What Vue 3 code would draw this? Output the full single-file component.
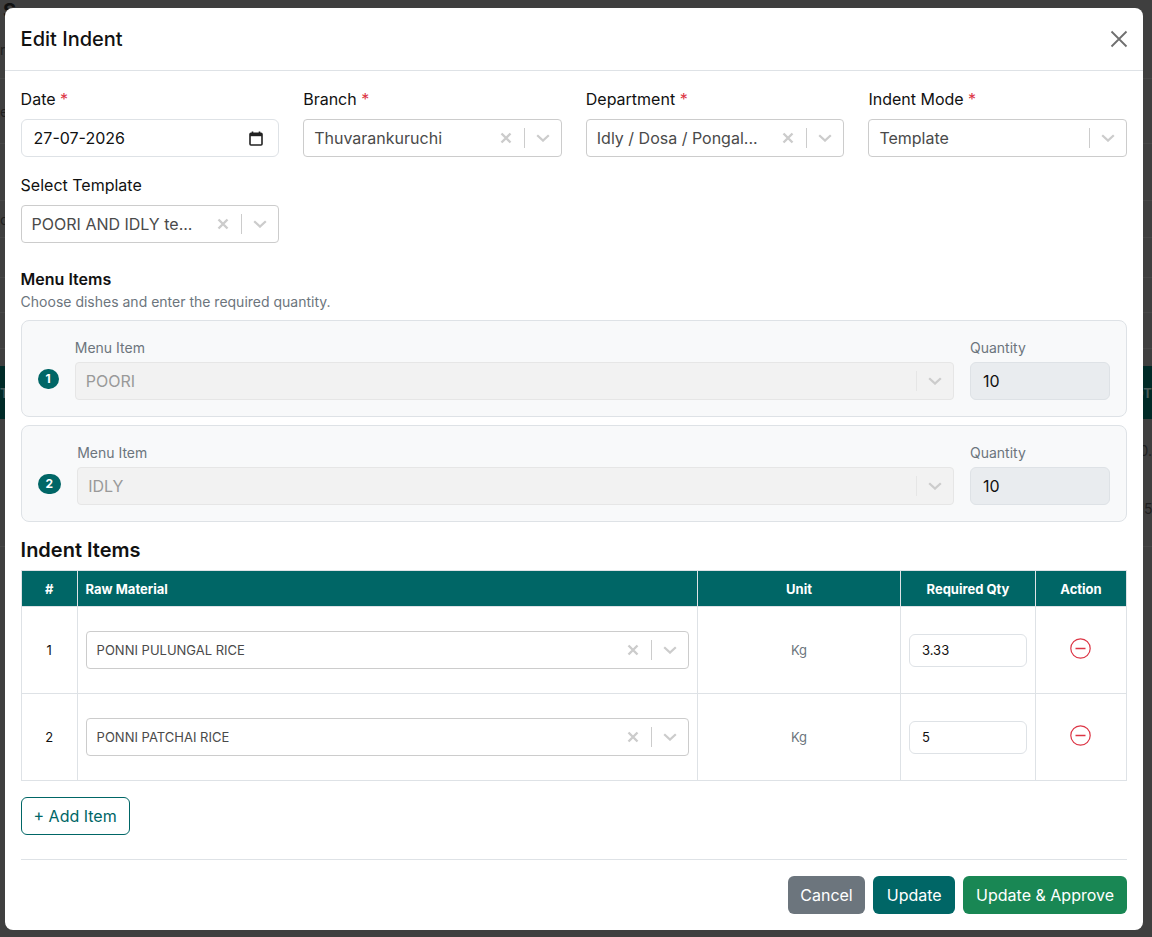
<template>
  <div class="page">
    <div class="behind">
      <span class="ghost g-title">S</span>
      <span class="ghost g-r">r</span>
      <span class="ghost g-e">e</span>
      <span class="ghost g-o">o</span>
      <div v-for="y in ghostLines" :key="y" class="ghost-line" :style="{ top: y + 'px' }"></div>
      <div class="ghost-bar">
        <span>T</span>
        <span>OT</span>
      </div>
      <span class="ghost g-d">0.</span>
      <span class="ghost g-5">5</span>
    </div>

    <div class="modal">
      <header class="modal-head">
        <h5>Edit Indent</h5>
        <svg class="close" width="18" height="18" viewBox="0 0 18 18">
          <path d="M1.5 1.5 16.5 16.5M16.5 1.5 1.5 16.5" stroke="#6f6f6f" stroke-width="1.8" fill="none" />
        </svg>
      </header>

      <div class="modal-body">
        <div class="form-grid">
          <div class="field">
            <label>Date <i>*</i></label>
            <div class="date-input">
              <span>27-07-2026</span>
              <svg width="14" height="15" viewBox="0 0 14 15">
                <path d="M3.5 0.5v2M10.5 0.5v2" stroke="#222" stroke-width="1.6" />
                <rect x="1" y="2.2" width="12" height="11.8" rx="1" fill="none" stroke="#222" stroke-width="1.6" />
                <rect x="1" y="2.2" width="12" height="3" fill="#222" />
              </svg>
            </div>
          </div>
          <div v-for="f in topFields" :key="f.label" class="field">
            <label>{{ f.label }} <i v-if="f.required">*</i></label>
            <div class="select">
              <span class="value">{{ f.value }}</span>
              <svg v-if="f.clear" class="x" width="12" height="12" viewBox="0 0 12 12">
                <path d="M1.5 1.5 10.5 10.5M10.5 1.5 1.5 10.5" stroke="#ccc" stroke-width="2.4" fill="none" />
              </svg>
              <span class="sep"></span>
              <svg class="chev" width="14" height="8" viewBox="0 0 14 8">
                <path d="M1.2 1.2 7 6.6 12.8 1.2" stroke="#ccc" stroke-width="2.2" fill="none" />
              </svg>
            </div>
          </div>
        </div>

        <h6 class="menu-title">Menu Items</h6>
        <p class="menu-sub">Choose dishes and enter the required quantity.</p>

        <div v-for="(m, i) in menuItems" :key="m" class="menu-card">
          <span class="badge">{{ i + 1 }}</span>
          <div class="menu-col">
            <label>Menu Item</label>
            <div class="select disabled">
              <span class="value">{{ m }}</span>
              <span class="sep"></span>
              <svg class="chev" width="14" height="8" viewBox="0 0 14 8">
                <path d="M1.2 1.2 7 6.6 12.8 1.2" stroke="#ccc" stroke-width="2.2" fill="none" />
              </svg>
            </div>
          </div>
          <div class="qty-col">
            <label>Quantity</label>
            <div class="qty">10</div>
          </div>
        </div>

        <h5 class="items-title">Indent Items</h5>
        <table>
          <thead>
            <tr>
              <th class="c-num">#</th>
              <th class="c-mat">Raw Material</th>
              <th class="c-unit">Unit</th>
              <th class="c-req">Required Qty</th>
              <th class="c-act">Action</th>
            </tr>
          </thead>
          <tbody>
            <tr v-for="(r, i) in rows" :key="r.name">
              <td class="num">{{ i + 1 }}</td>
              <td class="mat">
                <div class="select small">
                  <span class="value">{{ r.name }}</span>
                  <svg class="x" width="12" height="12" viewBox="0 0 12 12">
                    <path d="M1.5 1.5 10.5 10.5M10.5 1.5 1.5 10.5" stroke="#ccc" stroke-width="2.4" fill="none" />
                  </svg>
                  <span class="sep"></span>
                  <svg class="chev" width="14" height="8" viewBox="0 0 14 8">
                    <path d="M1.2 1.2 7 6.6 12.8 1.2" stroke="#ccc" stroke-width="2.2" fill="none" />
                  </svg>
                </div>
              </td>
              <td class="unit">Kg</td>
              <td class="req"><div class="req-input">{{ r.qty }}</div></td>
              <td class="act">
                <svg width="21" height="21" viewBox="0 0 21 21">
                  <circle cx="10.5" cy="10.5" r="9.7" fill="none" stroke="#dc3545" stroke-width="1.2" />
                  <path d="M5.5 10.5h10" stroke="#dc3545" stroke-width="1.5" />
                </svg>
              </td>
            </tr>
          </tbody>
        </table>

        <button class="add">+ Add Item</button>

        <footer class="actions">
          <button class="btn grey">Cancel</button>
          <button class="btn teal">Update</button>
          <button class="btn green">Update &amp; Approve</button>
        </footer>
      </div>
    </div>
  </div>
</template>

<script setup>
const topFields = [
  { label: "Branch", value: "Thuvarankuruchi", required: true, clear: true },
  { label: "Department", value: "Idly / Dosa / Pongal...", required: true, clear: true },
  { label: "Indent Mode", value: "Template", required: true, clear: false },
  { label: "Select Template", value: "POORI AND IDLY te...", required: false, clear: true },
];

const menuItems = ["POORI", "IDLY"];

const rows = [
  { name: "PONNI PULUNGAL RICE", qty: "3.33" },
  { name: "PONNI PATCHAI RICE", qty: "5" },
];

// faint table rows of the page under the backdrop
const ghostLines = [78, 143, 200, 237, 277, 312, 348, 546];
</script>

<style>
html,
body {
  margin: 0;
  background: #3f3f3f;
}
</style>

<style scoped>
.page {
  width: 1152px;
  height: 937px;
  position: relative;
  overflow: hidden;
  background: #3f3f3f;
  font-family: Inter, "Liberation Sans", sans-serif;
  color: #111;
}

.ghost {
  position: absolute;
  color: #1f1f1f;
  font-size: 14px;
  line-height: 20px;
}
.g-title { left: 3px; top: -1px; font-weight: 700; font-size: 20px; line-height: 24px; color: #111; }
.g-r { left: 0; top: 40px; }
.g-e { left: 0; top: 102px; }
.g-o { left: 0; top: 210px; }
.g-d { right: 0; top: 441px; }
.g-5 { left: 1144px; top: 499px; }
.ghost-line {
  position: absolute;
  left: 0;
  width: 1152px;
  height: 1px;
  background: #474747;
}
.ghost-bar {
  position: absolute;
  left: 0;
  top: 366px;
  width: 1152px;
  height: 53px;
  background: #002a27;
  display: flex;
  justify-content: space-between;
  align-items: center;
  color: #4a5b59;
  font-size: 13px;
  font-weight: 700;
}

.modal {
  position: absolute;
  left: 4.6px;
  top: 8px;
  width: 1138.4px;
  height: 922px;
  background: #fff;
  border-radius: 8px;
}

.modal-head {
  height: 62px;
  padding: 0 16px;
  display: flex;
  align-items: center;
  justify-content: space-between;
  border-bottom: 1px solid #dee2e6;
}
.modal-head h5 {
  margin: 0;
  font-size: 20px;
  font-weight: 500;
  color: #111;
}
.close {
  margin-right: -1px;
}

.modal-body {
  padding: 16px 16px 0;
}

.form-grid {
  display: grid;
  grid-template-columns: repeat(4, 1fr);
  column-gap: 24px;
  row-gap: 16px;
}
.field label {
  display: block;
  font-size: 16px;
  line-height: 24px;
  margin-bottom: 8px;
}
.field label i {
  font-style: normal;
  color: #dc3545;
}

.date-input {
  height: 38px;
  box-sizing: border-box;
  border: 1px solid #dee2e6;
  border-radius: 6px;
  padding: 0 15px 0 12px;
  display: flex;
  align-items: center;
  justify-content: space-between;
  font-size: 16px;
}

.select {
  height: 38px;
  box-sizing: border-box;
  border: 1px solid #ccc;
  border-radius: 4px;
  display: flex;
  align-items: center;
  background: #fff;
  padding-left: 10px;
  font-size: 16px;
  color: #4a4a4a;
}
.select .value {
  flex: 1;
  white-space: nowrap;
  overflow: hidden;
}
.select .x {
  margin-right: 12px;
}
.select .sep {
  width: 1px;
  height: 20px;
  background: #ccc;
}
.select .chev {
  margin: 0 11px;
}
.select.disabled {
  background: #f2f2f2;
  border-color: #e6e6e6;
  color: #999;
}
.select.disabled .sep {
  background: #e6e6e6;
}
.select.small {
  font-size: 13px;
}

.menu-title {
  margin: 24px 0 0;
  font-size: 16px;
  font-weight: 600;
  line-height: 24px;
  color: #111;
}
.menu-sub {
  margin: 1px 0 8px;
  font-size: 14px;
  line-height: 20px;
  color: #6c757d;
}

.menu-card {
  height: 97px;
  box-sizing: border-box;
  margin-bottom: 8px;
  border: 1px solid #dee2e6;
  border-radius: 8px;
  background: #f8f9fa;
  padding: 16px;
  display: flex;
  align-items: flex-end;
  gap: 16px;
}
.badge {
  flex: none;
  height: 20px;
  padding: 0 8px;
  border-radius: 10px;
  background: #006666;
  color: #fff;
  font-size: 12px;
  font-weight: 700;
  line-height: 20px;
  text-align: center;
  margin-bottom: 11px;
}
.menu-col {
  flex: 1;
  min-width: 0;
}
.menu-col label,
.qty-col label {
  display: block;
  font-size: 14px;
  line-height: 21px;
  margin-bottom: 4px;
  color: #6c757d;
}
.qty-col {
  width: 140px;
}
.qty {
  height: 38px;
  box-sizing: border-box;
  border: 1px solid #dee2e6;
  border-radius: 6px;
  background: #e9ecef;
  padding: 0 12px;
  display: flex;
  align-items: center;
  font-size: 16px;
}

.items-title {
  margin: 16px 0 8px;
  font-size: 20px;
  line-height: 24px;
  font-weight: 600;
  color: #111;
}

table {
  width: 100%;
  border-collapse: collapse;
  table-layout: fixed;
  font-size: 13px;
}
th {
  box-sizing: border-box;
  height: 36px;
  padding: 0 8px;
  background: #006666;
  color: #fff;
  font-size: 13px;
  font-weight: 700;
  border: 1px solid #dee2e6;
  text-align: center;
}
th.c-num { width: 56px; }
th.c-mat { text-align: left; }
th.c-unit { width: 203px; }
th.c-req { width: 135px; }
th.c-act { width: 91px; }
td {
  box-sizing: border-box;
  height: 87px;
  padding: 0 8px;
  border: 1px solid #dee2e6;
  text-align: center;
  vertical-align: middle;
}
td.mat { text-align: left; }
td.unit { color: #6c757d; }
.req-input {
  height: 33px;
  box-sizing: border-box;
  border: 1px solid #dee2e6;
  border-radius: 6px;
  padding: 0 12px;
  display: flex;
  align-items: center;
  font-size: 13px;
}
td.act svg {
  display: block;
  margin: -3px auto 0;
}

.add {
  display: block;
  margin-top: 16px;
  height: 38px;
  width: 109px;
  padding: 0;
  background: #fff;
  border: 1px solid #006666;
  border-radius: 6px;
  color: #006666;
  font: 400 16px Inter, "Liberation Sans", sans-serif;
}

.actions {
  margin-top: 24px;
  border-top: 1px solid #dee2e6;
  padding-top: 16px;
  display: flex;
  justify-content: flex-end;
  gap: 8px;
}
.btn {
  height: 38px;
  padding: 0 13.5px;
  border: 0;
  border-radius: 6px;
  color: #fff;
  font: 400 16px Inter, "Liberation Sans", sans-serif;
}
.btn.grey { background: #6c757d; padding: 0 12.5px; }
.btn.teal { background: #006666; }
.btn.green { background: #198754; padding: 0 13px; }
</style>
